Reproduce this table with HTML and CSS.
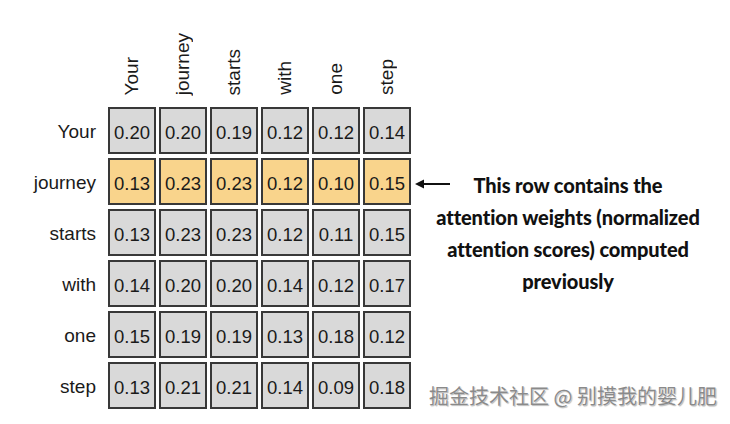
FILE: index.html
```html
<!DOCTYPE html>
<html>
<head>
<meta charset="utf-8">
<link rel="stylesheet" href="styles.css">
</head>
<body>
<div class="page">
  <div class="matrix">
    <div class="corner"></div>
    <div class="col-label"><span>Your</span></div>
    <div class="col-label"><span>journey</span></div>
    <div class="col-label"><span>starts</span></div>
    <div class="col-label"><span>with</span></div>
    <div class="col-label"><span>one</span></div>
    <div class="col-label"><span>step</span></div>

    <div class="row-label">Your</div>
    <div class="cell">0.20</div><div class="cell">0.20</div><div class="cell">0.19</div><div class="cell">0.12</div><div class="cell">0.12</div><div class="cell">0.14</div>

    <div class="row-label">journey</div>
    <div class="cell hl">0.13</div><div class="cell hl">0.23</div><div class="cell hl">0.23</div><div class="cell hl">0.12</div><div class="cell hl">0.10</div><div class="cell hl">0.15</div>

    <div class="row-label">starts</div>
    <div class="cell">0.13</div><div class="cell">0.23</div><div class="cell">0.23</div><div class="cell">0.12</div><div class="cell">0.11</div><div class="cell">0.15</div>

    <div class="row-label">with</div>
    <div class="cell">0.14</div><div class="cell">0.20</div><div class="cell">0.20</div><div class="cell">0.14</div><div class="cell">0.12</div><div class="cell">0.17</div>

    <div class="row-label">one</div>
    <div class="cell">0.15</div><div class="cell">0.19</div><div class="cell">0.19</div><div class="cell">0.13</div><div class="cell">0.18</div><div class="cell">0.12</div>

    <div class="row-label">step</div>
    <div class="cell">0.13</div><div class="cell">0.21</div><div class="cell">0.21</div><div class="cell">0.14</div><div class="cell">0.09</div><div class="cell">0.18</div>
  </div>

  <div class="note">
    <svg class="arrow" width="36" height="12" viewBox="0 0 36 12">
      <line x1="6" y1="6" x2="35" y2="6" stroke="#111" stroke-width="2"/>
      <polygon points="0,6 9,1.5 9,10.5" fill="#111"/>
    </svg>
    <p class="note-text">This row contains the<br>attention weights (normalized<br>attention scores) computed<br>previously</p>
  </div>
</div>
<div class="watermark">掘金技术社区 @ 别摸我的婴儿肥</div>
</body>
</html>
```

FILE: styles.css
```css
html, body {
  margin: 0;
  padding: 0;
  background: #ffffff;
}

body {
  width: 730px;
  height: 424px;
  position: relative;
  overflow: hidden;
  font-family: "Liberation Sans", Arial, sans-serif;
  color: #1a1a1a;
}

.page {
  display: flex;
  align-items: flex-start;
}

.matrix {
  display: grid;
  grid-template-columns: 105px repeat(6, 48px);
  grid-template-rows: 103px repeat(6, 47px);
  column-gap: 3px;
  row-gap: 4px;
}

.col-label {
  display: flex;
  justify-content: center;
  align-items: flex-end;
  padding-bottom: 8px;
}

.col-label span {
  writing-mode: vertical-rl;
  transform: rotate(180deg);
  font-size: 19px;
  line-height: 22px;
}

.row-label {
  display: flex;
  align-items: center;
  justify-content: flex-end;
  padding-right: 9px;
  padding-top: 3px;
  font-size: 19px;
}

.cell {
  box-sizing: border-box;
  border: 2px solid #383838;
  background: #d9d9d9;
  display: flex;
  align-items: center;
  justify-content: center;
  padding-top: 4px;
  font-size: 18.5px;
}

.cell.hl {
  background: #f9d48c;
}

.note {
  position: relative;
  width: 310px;
  margin-left: 2px;
  margin-top: 169px;
}

.arrow {
  position: absolute;
  left: 2px;
  top: 9px;
}

.note-text {
  margin: 0;
  text-align: center;
  font-family: "Lato", "Open Sans", sans-serif;
  font-weight: 900;
  font-size: 20px;
  line-height: 32px;
  letter-spacing: -0.1px;
  color: #111;
}

.watermark {
  position: absolute;
  right: 13px;
  bottom: 14px;
  font-family: "Noto Sans CJK SC", sans-serif;
  font-size: 20px;
  color: #8a8a8a;
  text-shadow: 0 0 1px #ffffff, 1px 1px 1px rgba(0, 0, 0, 0.3);
}
```
